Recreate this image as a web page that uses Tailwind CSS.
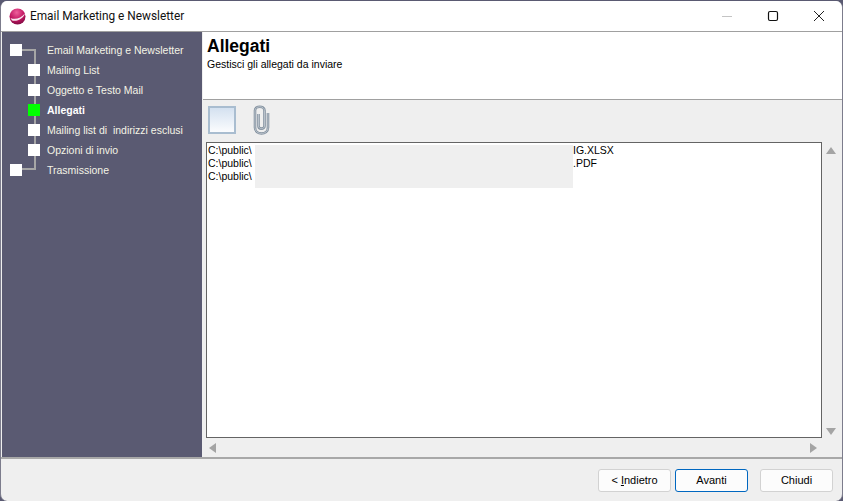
<!DOCTYPE html>
<html><head><meta charset="utf-8"><script src="https://cdn.jsdelivr.net/npm/@tailwindcss/browser@4"></script></head>
<body class="m-0 bg-[#5a5a72]">
<div class="w-[843px] h-[501px] bg-[#5a5a72] overflow-hidden font-['Liberation_Sans',sans-serif]">
<div class="w-full h-[500px] mt-px bg-[#efefef] rounded-[7px] border-x border-x-[#7c7c8c] flex flex-col overflow-hidden">
  <!-- title bar -->
  <div class="h-[30px] shrink-0 bg-white flex items-center pl-[8px]">
    <svg width="17" height="17" viewBox="0 0 17 17"><defs><radialGradient id="g" cx="0.45" cy="0.25" r="0.85"><stop offset="0" stop-color="#ee5f9c"/><stop offset="0.55" stop-color="#c0135f"/><stop offset="1" stop-color="#6a0a3a"/></radialGradient></defs><circle cx="8.5" cy="8.5" r="8" fill="url(#g)"/><path d="M1.5 10 C6 12 12 10.5 15.8 5.5 C15 10 8.5 14 3 12.5Z" fill="#f8e6ee"/></svg>
    <span class="ml-[4px] text-[11.85px] leading-[16px] text-[#111] font-['Roboto',sans-serif]">Email Marketing e Newsletter</span>
    <div class="ml-auto flex items-center h-full">
      <svg width="46" height="30" viewBox="0 0 46 30"><path d="M0 15.5H10" transform="translate(18 0)" stroke="#c4c4c4" stroke-width="1"/></svg>
      <svg width="46" height="30" viewBox="0 0 46 30"><rect x="18.5" y="10.5" width="9" height="9" rx="1.5" fill="none" stroke="#111" stroke-width="1.2"/></svg>
      <svg width="46" height="30" viewBox="0 0 46 30"><path d="M18 10L28 20M28 10L18 20" stroke="#222" stroke-width="1"/></svg>
    </div>
  </div>
  <!-- middle -->
  <div class="flex h-[428px] shrink-0 border-t border-b-2 border-t-[#a0a0a0] border-b-[#a8a8a8]">
    <aside class="relative w-[200px] ml-px shrink-0 bg-[#5a5a72] pt-[8px] text-[10.5px] text-[#f4f4e6]">
      <svg class="absolute left-0 top-0" width="201" height="160" viewBox="0 0 201 160"><path d="M20 18H34V137H20" transform="translate(-1 0)" fill="none" stroke="#a6a6a6" stroke-width="2"/></svg>
      <div class="relative flex flex-col">
        <div class="flex items-center h-[20px]"><span class="w-[12px] h-[12px] bg-white ml-[8px] mr-[25px]"></span><span class="pt-px">Email Marketing e Newsletter</span></div>
        <div class="flex items-center h-[20px]"><span class="w-[12px] h-[12px] bg-white ml-[26px] mr-[7px]"></span><span class="pt-px">Mailing List</span></div>
        <div class="flex items-center h-[20px]"><span class="w-[12px] h-[12px] bg-white ml-[26px] mr-[7px]"></span><span class="pt-px">Oggetto e Testo Mail</span></div>
        <div class="flex items-center h-[20px]"><span class="w-[12px] h-[12px] bg-[#00ff00] ml-[26px] mr-[7px]"></span><span class="pt-px font-bold text-white">Allegati</span></div>
        <div class="flex items-center h-[20px]"><span class="w-[12px] h-[12px] bg-white ml-[26px] mr-[7px]"></span><span class="pt-px whitespace-pre">Mailing list di  indirizzi esclusi</span></div>
        <div class="flex items-center h-[20px]"><span class="w-[12px] h-[12px] bg-white ml-[26px] mr-[7px]"></span><span class="pt-px">Opzioni di invio</span></div>
        <div class="flex items-center h-[20px]"><span class="w-[12px] h-[12px] bg-white ml-[8px] mr-[25px]"></span><span class="pt-px">Trasmissione</span></div>
      </div>
    </aside>
    <main class="flex-1 flex flex-col min-w-0 border-l border-l-[#efefef]">
      <div class="h-[68px] bg-white border-b border-b-[#a0a0a0] shrink-0 pl-[4px] pt-[3px]">
        <h1 class="text-[17.5px] leading-[22px] font-bold text-black">Allegati</h1>
        <p class="text-[10.5px] leading-[14px] text-black">Gestisci gli allegati da inviare</p>
      </div>
      <div class="flex items-center h-[42px] pb-[3px] pl-[5px] shrink-0">
        <div class="w-[28px] h-[28px] border-2 border-[#a9bdd0] bg-gradient-to-b from-[#d4e1f0] to-[#fbfcfe]"></div>
        <svg class="ml-[16px]" width="19" height="32" viewBox="0 0 19 32"><path d="M6.5 10V22C6.5 25.5 12.5 25.5 12.5 22V6.5C12.5 1.5 3 1.5 3 6.5V23.5C3 31.5 16 31.5 16 23.5V9" fill="none" stroke="#8492a0" stroke-width="2.6"/><path d="M6.5 10V22C6.5 25.5 12.5 25.5 12.5 22V6.5C12.5 1.5 3 1.5 3 6.5V23.5C3 31.5 16 31.5 16 23.5V9" fill="none" stroke="#c6ced6" stroke-width="0.8"/></svg>
      </div>
      <div class="flex pl-[3px] h-[296px] shrink-0">
        <div class="relative w-[616px] h-[296px] bg-white border border-[#646464] pl-[1px] pt-[1px] text-[10.5px] leading-[13px] text-black">
          <div class="flex"><span class="w-[365px]">C:\public\</span><span>IG.XLSX</span></div>
          <div class="flex"><span class="w-[365px]">C:\public\</span><span>.PDF</span></div>
          <div class="flex"><span class="w-[365px]">C:\public\</span></div>
          <div class="absolute left-[48px] top-[2px] w-[318px] h-[43px] bg-[#efefef]"></div>
        </div>
        <div class="flex-1 flex flex-col items-center justify-between pt-[5px] pb-[3px] pr-[2px]">
          <svg width="10" height="7" viewBox="0 0 10 7"><path d="M5 0L10 7H0Z" fill="#a4a4a4"/></svg>
          <svg width="10" height="7" viewBox="0 0 10 7"><path d="M0 0H10L5 7Z" fill="#a4a4a4"/></svg>
        </div>
      </div>
      <div class="flex items-center justify-between w-[616px] ml-[3px] h-[20px] px-[3px] shrink-0">
        <svg width="7" height="10" viewBox="0 0 7 10"><path d="M7 0V10L0 5Z" fill="#a4a4a4"/></svg>
        <svg class="mr-[2px]" width="7" height="10" viewBox="0 0 7 10"><path d="M0 0V10L7 5Z" fill="#a4a4a4"/></svg>
      </div>
    </main>
  </div>
  <!-- footer -->
  <div class="flex-1 flex items-start pt-[10px] pl-[597px] text-[11px] text-black">
    <button class="w-[73px] h-[23px] rounded-[3px] bg-[#fcfcfc] border border-[#d2d2d2]">&lt; <u>I</u>ndietro</button>
    <button class="ml-[4px] w-[73px] h-[23px] rounded-[3px] bg-[#fcfcfc] border border-[#0067c0]">Avanti</button>
    <button class="ml-[12px] w-[73px] h-[23px] rounded-[3px] bg-[#fcfcfc] border border-[#d2d2d2]">Chiudi</button>
  </div>
</div>
</div>
</body></html>
